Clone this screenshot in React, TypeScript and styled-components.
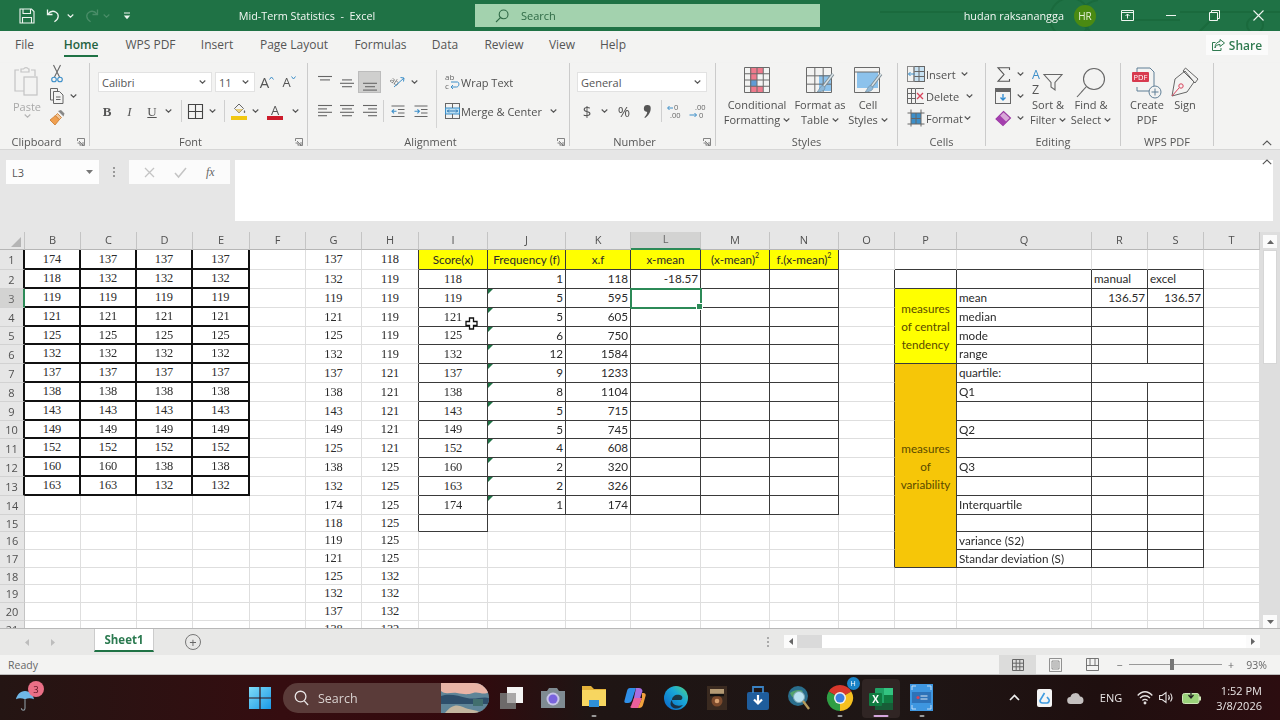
import React from "react";
import styled, { createGlobalStyle } from "styled-components";

const Global = createGlobalStyle`
  html, body { margin: 0; padding: 0; background: #e6e6e6; overflow: hidden; }
  #root { width: 1280px; height: 720px; }
  * { box-sizing: border-box; }
  svg { display: block; flex-shrink: 0; overflow: visible; }
`;

const Window = styled.div`
  width: 1280px; height: 720px; display: flex; flex-direction: column; overflow: hidden;
  font-family: "Open Sans", "Noto Sans", sans-serif; color: #4f4f4f; filter: blur(0.45px);
`;

/* ---------- shared small parts ---------- */
const Slot = styled.div<{ $w: number }>`
  width: ${(p) => p.$w}px; flex-shrink: 0; display: flex; align-items: center; justify-content: center; height: 100%;
`;
const EndSlot = styled(Slot)`justify-content: flex-end; padding-right: 1px;`;
const Row = styled.div`display: flex; align-items: center; height: 20px;`;
const Stack = styled.div<{ $gap?: number; $top?: number; $left?: number; $right?: number }>`
  display: flex; flex-direction: column; gap: ${(p) => p.$gap ?? 9}px;
  padding: ${(p) => p.$top ?? 9}px ${(p) => p.$right ?? 0}px 0 ${(p) => p.$left ?? 0}px;
`;
const Sep = styled.div`width: 1px; height: 22px; background: #cfcfcf;`;

const Caret = ({ c = "#555" }: { c?: string }) => (
  <svg width="7" height="4" viewBox="0 0 7 4"><path d="M.7.5 3.5 3.2 6.3.5" fill="none" stroke={c} strokeWidth="1.1" /></svg>
);

/* ---------- title bar ---------- */
const TitleBar = styled.header`
  position: relative; height: 31px; flex-shrink: 0; display: flex; align-items: center;
  background: #1f7245; color: #f2f7f3; font-size: 11px; overflow: hidden; padding-left: 16px;
`;
const Pattern = styled.svg`position: absolute; right: 0; top: 0; pointer-events: none;`;
const DocTitle = styled.div`width: 339px; text-align: center; padding-left: 3px; font-size: 10.8px; position: relative;`;
const TitleSearch = styled.div`
  width: 345px; height: 23px; background: #a3d2ae; color: #2f6a46; display: flex; align-items: center;
  font-size: 11px; position: relative;
`;
const SearchIconBox = styled.div`width: 46px; display: flex; justify-content: flex-end; padding-right: 12px;`;
const UserName = styled.div`margin-left: auto; font-size: 10.9px; margin-right: 10px; position: relative;`;
const Avatar = styled.div`
  width: 22px; height: 22px; border-radius: 50%; background: #4a8a12; color: #e4f0d6; font-size: 10px;
  display: flex; align-items: center; justify-content: center; margin-right: 10px; position: relative;
`;
const WinButton = styled.div`width: 43.5px; height: 100%; display: flex; align-items: center; justify-content: center; position: relative;`;

const SaveIcon = () => (
  <svg width="16" height="16" viewBox="0 0 16 16" fill="none" stroke="#eef5f0" strokeWidth="1.1">
    <path d="M1 1h11.5L15 3.5V15H1z" /><path d="M4 1v4.5h7.5V1M3.5 15V9.5h9V15" />
  </svg>
);
const UndoIcon = ({ c = "#eef5f0", flip }: { c?: string; flip?: boolean }) => (
  <svg width="15" height="15" viewBox="0 0 15 15" fill="none" stroke={c} strokeWidth="1.3">
    <g transform={flip ? "matrix(-1 0 0 1 15 0)" : undefined}>
      <path d="M1.5 1.5v5h5" /><path d="M1.8 6.4C4 3.4 7.4 2.7 10 4.2c3 1.8 3.4 6.5-1.6 9.6" />
    </g>
  </svg>
);
const QatIcon = () => (
  <svg width="8" height="8" viewBox="0 0 8 8"><path d="M1 1h6" stroke="#eef5f0" strokeWidth="1" /><path d="M.8 3.6h6.4L4 7.2z" fill="#eef5f0" /></svg>
);
const GlassIcon = ({ c = "#2f6a46", s = 14 }: { c?: string; s?: number }) => (
  <svg width={s} height={s} viewBox="0 0 14 14" fill="none" stroke={c} strokeWidth="1.1">
    <circle cx="8.6" cy="5.4" r="4.4" /><path d="M5.4 8.6 1 13" />
  </svg>
);

/* ---------- tabs ---------- */
const TabRow = styled.nav`height: 32px; flex-shrink: 0; display: flex; align-items: flex-start; padding-top: 2px; background: #f3f3f2;`;
const Tab = styled.div<{ $w: number; $on?: boolean }>`
  width: ${(p) => p.$w}px; text-align: center; font-size: 12px; line-height: 16px;
  color: ${(p) => (p.$on ? "#23623f" : "#555")}; font-weight: ${(p) => (p.$on ? 600 : 400)};
  span { display: inline-block; padding: 4px 0 2px; border-bottom: 2.5px solid ${(p) => (p.$on ? "#1f7245" : "transparent")}; }
`;
const ShareButton = styled.div`
  margin-left: auto; margin-right: 12px; width: 62px; height: 20px; background: #fbfbfb; color: #2f7a50;
  display: flex; align-items: center; justify-content: center; gap: 4px; font-size: 12px; font-weight: 600; margin-top: 2px;
`;

/* ---------- ribbon ---------- */
const Ribbon = styled.section`
  height: 87px; flex-shrink: 0; display: flex; background: #f3f3f2; border-bottom: 1px solid #d6d6d6;
  box-shadow: 0 1px 2px rgba(0,0,0,.08); position: relative; font-size: 11px; color: #505050;
`;
const Group = styled.div<{ $w: number; $plain?: boolean }>`
  width: ${(p) => p.$w}px; height: 83px; flex-shrink: 0; display: flex; flex-direction: column;
  border-right: ${(p) => (p.$plain ? "none" : "1px solid #cbcbcb")};
`;
const GroupBody = styled.div`height: 71px; flex-shrink: 0; display: flex;`;
const GroupFoot = styled.div`height: 15px; flex-shrink: 0; display: flex; align-items: center; margin-bottom: -3px; color: #565656;`;
const FootText = styled.div`flex: 1; text-align: center; white-space: nowrap;`;
const FootSlot = styled.div`width: 16px; display: flex; justify-content: center;`;
const Launcher = () => (
  <FootSlot>
    <svg width="8" height="8" viewBox="0 0 8 8" fill="none" stroke="#777" strokeWidth=".9"><path d="M.5 3V.5h7v7H5M.5 5h2.500v2.500M2 3l4 4M6 4v3H3" /></svg>
  </FootSlot>
);
const PasteCol = styled.div`
  width: 49px; padding: 3px 0 0 5px; display: flex; flex-direction: column; align-items: center; color: #a9a9a9; line-height: 15px;
  svg:first-child { margin-bottom: 3px; }
`;
const ToolCol = styled.div`display: flex; flex-direction: column; padding-top: 0;`;
const ToolRow = styled.div`height: 22px; display: flex; align-items: center;`;
const Select = styled.div<{ $w: number; $ml?: number }>`
  width: ${(p) => p.$w}px; height: 20px; background: #fff; border: 1px solid #e2e2e2; display: flex; align-items: center;
  justify-content: space-between; padding: 0 5px 0 3px; font-size: 11px; margin-left: ${(p) => p.$ml ?? 0}px; color: #555;
`;
const FontGlyph = styled.span<{ $s?: number; $i?: boolean; $b?: boolean; $u?: boolean; $c?: string }>`
  font-family: "Liberation Serif", serif; font-size: ${(p) => p.$s ?? 13}px; color: ${(p) => p.$c ?? "#555"};
  font-style: ${(p) => (p.$i ? "italic" : "normal")}; font-weight: ${(p) => (p.$b ? 700 : 400)};
  text-decoration: ${(p) => (p.$u ? "underline" : "none")}; line-height: 1;
`;
const SansGlyph = styled.span<{ $s?: number }>`font-family: "Open Sans", sans-serif; font-size: ${(p) => p.$s ?? 15}px; color: #555; line-height: 1;`;
const ActiveSlot = styled(Slot)`background: #cfcfce; border: 1px solid #bcbcbc; height: 22px;`;
const VRule = styled.div`width: 1px; height: 58px; background: #d4d4d4; margin-top: 7px;`;
const ToolText = styled.span`white-space: nowrap; font-size: 11px; color: #505050;`;
const BigButton = styled.div<{ $w: number }>`
  width: ${(p) => p.$w}px; flex-shrink: 0; display: flex; flex-direction: column; align-items: center; line-height: 15px;
  white-space: nowrap; color: #505050;
`;
const BigIcon = styled.div`height: 34px; padding-top: 4px; display: flex; align-items: flex-start; justify-content: center;`;
const BigLine = styled.div`display: flex; align-items: center; gap: 3px;`;
const Collapse = styled.div`margin-left: auto; align-self: flex-end; margin: 0 8px 3px auto;`;

const Lines = ({ rows, top = 0, w = 14 }: { rows: [number, number][]; top?: number; w?: number }) => (
  <svg width={w} height="14" viewBox={`0 0 ${w} 14`} stroke="#666" strokeWidth="1.1">
    {rows.map(([x, l], i) => <path key={i} d={`M${x} ${top + i * 3.4 + .5}h${l}`} />)}
  </svg>
);
const Indent = ({ flip }: { flip?: boolean }) => (
  <svg width="14" height="13" viewBox="0 0 14 13" fill="none" strokeWidth="1.1">
    <path d="M.5 1h13M7 4.5h6.5M7 8h6.5M.5 11.5h13" stroke="#666" />
    <path d={flip ? "M.5 6.3h4.5M3.4 4.3l2 2-2 2" : "M5.5 6.3H1M3 4.3l-2 2 2 2"} stroke="#3d8fc9" />
  </svg>
);

const Clip = () => (
  <svg width="26" height="30" viewBox="0 0 26 30" fill="none" stroke="#c4c4c4" strokeWidth="1.2">
    <path d="M5 4H1v21h9" /><path d="M17 4h4v6" /><path d="M7 6V3h2.500a3 3 0 0 1 5 0H15v3z" />
    <rect x="10" y="11" width="13" height="18" fill="#f3f3f2" />
  </svg>
);
const Scissors = () => (
  <svg width="12" height="18" viewBox="0 0 12 18" fill="none" strokeWidth="1.1">
    <path d="M2.500 0l6 12M9.500 0l-6 12" stroke="#666" /><circle cx="3" cy="14.500" r="2.300" stroke="#3d8fc9" /><circle cx="9" cy="14.500" r="2.300" stroke="#3d8fc9" />
  </svg>
);
const CopyIcon = () => (
  <svg width="14" height="16" viewBox="0 0 14 16" fill="none" stroke="#666" strokeWidth="1">
    <path d="M3 12H.5V.5h7V3" /><path d="M3.500 3.500h6l3.500 3.500v8.500H3.500zM6 9h4.500M6 11.500h4.500" />
  </svg>
);
const Painter = () => (
  <svg width="16" height="16" viewBox="0 0 16 16">
    <path d="M9 1l3-1 3.500 3.500-1 3z" fill="#888" /><path d="M8.500 3.500l4 4-2.200 2.200-4-4z" fill="#f3c89a" stroke="#c9792c" strokeWidth=".8" />
    <path d="M6.300 5.700l4 4L6 15 1 10z" fill="#f0a050" stroke="#c9792c" strokeWidth=".8" />
  </svg>
);
const BorderIcon = () => (
  <svg width="15" height="15" viewBox="0 0 15 15" fill="none" stroke="#444" strokeWidth="1.1"><path d="M.5.5h14v14H.5zM7.500.5v14M.5 7.500h14" /></svg>
);
const FillIcon = () => (
  <svg width="16" height="17" viewBox="0 0 16 17">
    <path d="M8 1l4.500 4.500L8 10 3.500 5.500z" fill="none" stroke="#666" strokeWidth="1" /><path d="M4 6h8l-4 4z" fill="#e8d080" />
    <path d="M13.500 7c1 1.500 1 3 0 3s-1-1.500 0-3z" fill="#666" /><rect y="13" width="16" height="4" fill="#f2c811" />
  </svg>
);
const ColorA = () => (
  <svg width="16" height="17" viewBox="0 0 16 17">
    <text x="8" y="11.500" textAnchor="middle" fontFamily="Open Sans, sans-serif" fontSize="13" fill="#555">A</text>
    <rect y="13" width="16" height="4" fill="#cc1b2b" />
  </svg>
);
const Orient = () => (
  <svg width="15" height="14" viewBox="0 0 15 14">
    <text x="0" y="8" fontSize="8" fontFamily="Open Sans, sans-serif" fill="#666" transform="rotate(35 3 6)">ab</text>
    <path d="M4 12 14 3M10.500 2.500 14 3l-.5 3.500" fill="none" stroke="#3d8fc9" strokeWidth="1" />
  </svg>
);
const WrapIcon = () => (
  <svg width="15" height="18" viewBox="0 0 15 18">
    <text x="0" y="7" fontSize="8" fontFamily="Open Sans, sans-serif" fill="#666">ab</text>
    <text x="0" y="16" fontSize="8" fontFamily="Open Sans, sans-serif" fill="#666">c</text>
    <path d="M6 9h6.500c2 0 2 5-1 5H6M8 12l-2 2 2 2" fill="none" stroke="#3d8fc9" strokeWidth="1" />
  </svg>
);
const MergeIcon = () => (
  <svg width="15" height="16" viewBox="0 0 15 16" fill="none" strokeWidth="1">
    <rect x=".5" y=".5" width="14" height="15" stroke="#666" /><rect x=".5" y="5" width="14" height="6" fill="#bfe0f2" stroke="#3d8fc9" />
    <path d="M7.500.5V5M7.500 11v4.500" stroke="#666" /><path d="M2 8h11M4 6.500 2.500 8 4 9.500M11 6.500 12.500 8 11 9.500" stroke="#2d79b5" />
  </svg>
);
const DecIcon = ({ inc }: { inc?: boolean }) => (
  <svg width="16" height="15" viewBox="0 0 16 15">
    <text x={inc ? 7 : 6} y="6" fontSize="7.500" fontFamily="Open Sans, sans-serif" fill="#666">{inc ? "0" : ".00"}</text>
    <text x={inc ? 3 : 10} y="14" fontSize="7.500" fontFamily="Open Sans, sans-serif" fill="#666">{inc ? ".00" : "0"}</text>
    {inc
      ? <path d="M6 4H.8M2.500 2 .6 4l1.900 2" fill="none" stroke="#3d8fc9" strokeWidth="1" />
      : <path d="M.5 11h7M5.500 9l2 2-2 2" fill="none" stroke="#3d8fc9" strokeWidth="1" />}
  </svg>
);
const CommaIcon = () => (
  <svg width="7" height="13" viewBox="0 0 7 13"><path d="M3.500 0a3.200 3.200 0 0 1 3.200 3.400C6.700 7.500 4 11 1 13l-.6-.8C2 10.800 3 9 3.200 7A3.400 3.400 0 0 1 3.500 0z" fill="#555" /></svg>
);
const GridBase = ({ w = 26, h = 26, cols = 4, rows = 4 }: { w?: number; h?: number; cols?: number; rows?: number }) => (
  <>
    {Array.from({ length: cols + 1 }, (_, i) => <path key={`c${i}`} d={`M${.5 + (i * (w - 1)) / cols} .5V${h - .5}`} stroke="#6a6a6a" strokeWidth="1" />)}
    {Array.from({ length: rows + 1 }, (_, i) => <path key={`r${i}`} d={`M.5 ${.5 + (i * (h - 1)) / rows}H${w - .5}`} stroke="#6a6a6a" strokeWidth="1" />)}
  </>
);
const CondIcon = () => (
  <svg width="26" height="26" viewBox="0 0 26 26">
    <rect x="6" y="1" width="13" height="6" fill="#ef7a8c" /><rect x="6" y="7" width="7" height="6" fill="#ef7a8c" /><rect x="6" y="13" width="7" height="6" fill="#5f9bd5" /><rect x="6" y="19" width="13" height="6" fill="#ef7a8c" />
    <GridBase />
  </svg>
);
const Brush = () => (
  <>
    <path d="M27 7 17 20" stroke="#7c8a92" strokeWidth="3.200" /><path d="M27 7 17 20" stroke="#d9e2e6" strokeWidth="1.400" />
    <path d="M15.500 19c2-1 4 .8 3.200 3-1 2.400-5 3-7.500 2.600 2-1 2.200-4.500 4.300-5.600z" fill="#8fb8d8" stroke="#6f8c9f" strokeWidth=".7" />
  </>
);
const TableIcon = () => (
  <svg width="28" height="28" viewBox="0 0 28 28">
    <rect x="13" y="8" width="13" height="16" fill="#8cc2ec" /><GridBase w={26} h={26} cols={3} rows={3} /><Brush />
  </svg>
);
const StyleIcon = () => (
  <svg width="28" height="28" viewBox="0 0 28 28">
    <rect x="3" y="5" width="21" height="16" fill="#8cc2ec" />
    <path d="M.5.5h25v25H.5z M.5 5h25" fill="none" stroke="#6a6a6a" /><Brush />
  </svg>
);
const InsertIcon = () => (
  <svg width="18" height="16" viewBox="0 0 18 16" fill="none" strokeWidth="1">
    <rect x="7" y=".5" width="10.500" height="15" fill="#c8e2f3" stroke="#666" /><path d="M7 5.500h10.500M7 10.500h10.500M12 .5v15" stroke="#666" />
    <rect x=".5" y=".5" width="6.500" height="15" stroke="#888" /><path d="M1.500 8h6M3.500 6l-2 2 2 2" stroke="#3d8fc9" />
  </svg>
);
const DeleteIcon = () => (
  <svg width="18" height="16" viewBox="0 0 18 16" fill="none" strokeWidth="1">
    <path d="M.5.5h8v15h-8zM.5 5.500h8M.5 10.500h8M4.500.5v15M9 .5h8M9 15.500h8" stroke="#666" />
    <path d="M10 5l6 6M16 5l-6 6" stroke="#d8425a" strokeWidth="1.300" />
  </svg>
);
const FormatIcon = () => (
  <svg width="18" height="18" viewBox="0 0 18 18" fill="none" strokeWidth="1">
    <rect x="4" y="4" width="10" height="11" fill="#3d8fc9" /><path d="M.5 4h17M.5 15h17M4 .5v17M14 .5v17M9 4v11M4 9.500h10" stroke="#666" />
  </svg>
);
const FillDown = () => (
  <svg width="16" height="16" viewBox="0 0 16 16" fill="none"><rect x=".5" y=".5" width="15" height="15" stroke="#666" /><rect x="1" y="1" width="14" height="3" fill="#666" /><path d="M8 6v6M5.500 9.500 8 12l2.500-2.500" stroke="#2d8ad0" strokeWidth="1.300" /></svg>
);
const Eraser = () => (
  <svg width="16" height="15" viewBox="0 0 16 15"><path d="M8.500.5 15.500 7 8 14.500 1 8z" fill="#d8a7d8" stroke="#9b3aa3" strokeWidth="1.100" /><path d="M5 4.500l6.500 6.500L8 14.500 1 8z" fill="#a43fae" /></svg>
);
const Sigma = () => (
  <svg width="13" height="15" viewBox="0 0 13 15" fill="none" stroke="#555" strokeWidth="1.100"><path d="M12.500 3V.7H1L7 7.500 1 14.300h11.500V12" /></svg>
);
const SortIcon = () => (
  <svg width="32" height="30" viewBox="0 0 32 30">
    <text x="0" y="12" fontSize="12.500" fontFamily="Open Sans, sans-serif" fill="#3d8fc9">A</text>
    <text x="0" y="27" fontSize="12.500" fontFamily="Open Sans, sans-serif" fill="#555">Z</text>
    <path d="M12 7.500h18l-7 8v7.500l-4-3v-4.500z" fill="none" stroke="#666" strokeWidth="1.100" />
  </svg>
);
const FindIcon = () => (
  <svg width="30" height="31" viewBox="0 0 30 31" fill="none" stroke="#666" strokeWidth="1.100"><circle cx="18" cy="12" r="10.500" /><path d="M10.500 19.500 1 30" /></svg>
);
const PdfIcon = () => (
  <svg width="30" height="32" viewBox="0 0 30 32" fill="none">
    <path d="M5 5V1h13l4 4v19H5v-4M5 10v4" stroke="#5f7e96" strokeWidth="1" />
    <rect x="0" y="5" width="17" height="10" rx="1" fill="#d83a4e" />
    <text x="8.500" y="13" textAnchor="middle" fontSize="7.500" fontFamily="Open Sans, sans-serif" fill="#fff">PDF</text>
    <circle cx="23" cy="25" r="6" fill="#f3f3f2" stroke="#5f7e96" /><path d="M23 21.500v7M19.500 25h7" stroke="#5f7e96" />
  </svg>
);
const SignIcon = () => (
  <svg width="28" height="31" viewBox="0 0 28 31" fill="none" stroke="#666" strokeWidth="1">
    <path d="M14 4 4 12 1 29l15-4 7-10z" /><path d="M14.500 1 27 12l-3 4-12-12z" />
    <path d="M1 29l7-8" stroke="#d8425a" /><circle cx="10" cy="19" r="2.200" stroke="#d8425a" />
  </svg>
);
const ChevronUp = () => (
  <svg width="10" height="6" viewBox="0 0 10 6" fill="none" stroke="#555" strokeWidth="1.100"><path d="M.8 5.200 5 1l4.200 4.200" /></svg>
);

/* ---------- formula bar ---------- */
const FormulaBar = styled.div`
  height: 82px; flex-shrink: 0; background: #e6e6e6; display: flex; align-items: flex-start; padding: 10px 7px 0 6px; position: relative;
`;
const NameBox = styled.div`
  width: 93px; height: 24px; background: #fdfdfd; display: flex; align-items: center; justify-content: space-between;
  padding: 0 6px; font-size: 11px; color: #555;
`;
const Dots = styled.div`
  width: 30px; height: 24px; display: flex; flex-direction: column; align-items: center; justify-content: center; gap: 2px;
  i { width: 2px; height: 2px; background: #999; }
`;
const FxGroup = styled.div`
  width: 101px; height: 24px; background: #fbfbfb; display: flex; align-items: center; justify-content: space-around; padding: 0 6px;
`;
const FxMark = styled.span`font-family: "Liberation Serif", serif; font-style: italic; font-size: 12px; color: #666;`;
const FormulaInput = styled.div`margin-left: 5px; flex: 1; height: 61px; background: #fff;`;
const FormulaCollapse = styled.div`position: absolute; right: 8px; top: 9px;`;

/* ---------- sheet ---------- */
const SheetArea = styled.div`height: 397px; flex-shrink: 0; display: flex; background: #e6e6e6; border-bottom: 1px solid #b8b8b8;`;
const Grid = styled.div`
  width: 1260px; height: 396px; overflow: hidden; display: grid; background: #fff;
  grid-template-columns: 25px 56px 56px 56px 57px 56px 56px 57px 69px 78px 65px 70px 69px 69px 56px 62px 135px 56px 56px 56px;
  grid-template-rows: 17px 20px 19px 19px 19px 18px 19px 19px 19px 19px 18px 19px 19px 19px 19px 17px 18px 18px 17px 18px 18px 18px;
  padding-top: 1px;
`;
const HeadCell = styled.div<{ $on?: boolean; $rb?: string; $bb?: string; $col?: boolean }>`
  background: ${(p) => (p.$on ? "#d3d3d2" : "#e6e6e6")};
  color: ${(p) => (p.$on ? "#666" : "#505050")}; font-size: 11px;
  display: flex; align-items: center; justify-content: center; line-height: 1;
  border-right: ${(p) => p.$rb ?? "1px solid #c4c4c4"};
  border-bottom: ${(p) => p.$bb ?? "1px solid #b6b6b6"};
  ${(p) => (p.$col ? "margin-top: -1px; padding-bottom: 3px;" : "")}
`;
const Corner = styled(HeadCell)`
  align-items: flex-end; justify-content: flex-end; padding: 0 3px 2px 0;
  &::after { content: ""; border-style: solid; border-width: 0 0 10px 10px; border-color: transparent transparent #b5b5b5 transparent; }
`;
const FONT = { serif: `"Liberation Serif", serif`, sans: `Lato, "Open Sans", sans-serif` };
const Cell = styled.div<{
  $r: string; $b: string; $align: string; $sans?: boolean; $bg?: string; $rs?: number; $cs?: number; $flag?: boolean; $sel?: boolean; $wrap?: boolean;
}>`
  position: relative; display: flex; align-items: center; justify-content: ${(p) => p.$align}; padding: 0 2px;
  font-family: ${(p) => (p.$sans ? FONT.sans : FONT.serif)}; font-size: ${(p) => (p.$sans ? 11.7 : 12.4)}px; color: #2b2b2b; line-height: 1;
  white-space: nowrap; background: ${(p) => p.$bg ?? "#fff"};
  border-right: ${(p) => p.$r}; border-bottom: ${(p) => p.$b};
  ${(p) => (p.$rs ? `grid-row: span ${p.$rs};` : "")} ${(p) => (p.$cs ? `grid-column: span ${p.$cs};` : "")}
  ${(p) => (p.$wrap ? `white-space: normal; text-align: center; line-height: 18px; color: #5a4a00;` : "")}
  ${(p) => p.$flag ? `&::before { content: ""; position: absolute; left: 0; top: 0; border-style: solid; border-width: 5px 5px 0 0; border-color: #1f7245 transparent transparent transparent; }` : ""}
  ${(p) => p.$sel ? `outline: 2px solid #2c8a57; outline-offset: -1px; z-index: 2; &::after { content: ""; position: absolute; right: -3px; bottom: -3px; width: 5px; height: 5px; background: #2c8a57; border: 1px solid #fff; }` : ""}
  sup { font-size: 7px; line-height: 0; position: relative; top: -1px; }
`;
const Pointer = styled.svg`position: absolute; left: 46px; top: 9px; z-index: 3;`;
const VScroll = styled.div`width: 20px; height: 396px; padding: 3px 3px 0 3px; display: flex; flex-direction: column; align-items: stretch; background: #dedede;`;
const ScrollBtn = styled.div<{ $w?: number }>`
  height: 13px; background: #fbfbfb; display: flex; align-items: center; justify-content: center; flex-shrink: 0;
  ${(p) => (p.$w ? `width: ${p.$w}px; height: 100%;` : "")}
`;
const VThumb = styled.div`height: 114px; margin-top: 2px; background: #fff; border: 1px solid #d6d6d6;`;
const VFill = styled.div`flex: 1;`;
const Tri = ({ d, c = "#666" }: { d: "u" | "d" | "l" | "r"; c?: string }) => {
  const p = { u: "M0 4 3.500 0 7 4z", d: "M0 0h7L3.500 4z", l: "M4 0v7L0 3.500z", r: "M0 0v7l4-3.500z" }[d];
  return <svg width={d === "u" || d === "d" ? 7 : 4} height={d === "u" || d === "d" ? 4 : 7}><path d={p} fill={c} /></svg>;
};

/* ---------- sheet tabs + status ---------- */
const TabStrip = styled.div`height: 26px; flex-shrink: 0; background: #e8e8e7; display: flex; padding-left: 14px;`;
const SheetTab = styled.div`
  width: 60px; height: 23px; margin-left: 28px; background: #fff; border-bottom: 2px solid #1f7245; color: #2b7a50; font-weight: 700; font-size: 11.5px;
  display: flex; align-items: center; justify-content: center; border-left: 1px solid #ccc; border-right: 1px solid #ccc;
`;
const PlusCircle = styled.div`
  width: 16px; height: 16px; border-radius: 50%; border: 1px solid #777; color: #666; display: flex; align-items: center; justify-content: center;
  font-size: 13px; line-height: 1;
`;
const HScroll = styled.div`margin: 6px 20px 0 auto; display: flex; height: 13px; align-items: stretch;`;
const VDots = styled.div`
  width: 16px; margin-right: 8px; display: flex; flex-direction: column; gap: 2px; align-items: center; justify-content: center;
  i { width: 2px; height: 2px; background: #aaa; }
`;
const HTrack = styled.div`width: 25px; background: #dadada;`;
const HThumb = styled.div`width: 424px; background: #fff;`;
const StatusBar = styled.div`height: 20px; flex-shrink: 0; background: #f3f3f2; display: flex; align-items: center; font-size: 10.500px; color: #666; padding-left: 8px; border-bottom: 1px solid #bdbdbd;`;
const StatusGap = styled.div`margin-left: auto;`;
const ViewBtn = styled.div<{ $on?: boolean; $w: number }>`
  width: ${(p) => p.$w}px; height: 100%; display: flex; align-items: center; justify-content: center; background: ${(p) => (p.$on ? "#dcdcdb" : "transparent")};
`;
const Zoomer = styled.div`position: relative; width: 93px; height: 1px; background: #999;`;
const ZoomThumb = styled.div`position: absolute; left: 41px; top: -5px; width: 4px; height: 11px; background: #777;`;
const Pct = styled.div`width: 33px; text-align: center;`;
const ViewGrid = () => (
  <svg width="12" height="12" viewBox="0 0 12 12" fill="none" stroke="#666"><path d="M.5.5h11v11H.5zM4.200.5v11M7.800.5v11M.5 4.200h11M.5 7.800h11" /></svg>
);
const ViewPage = () => (
  <svg width="13" height="14" viewBox="0 0 13 14" fill="none" stroke="#777"><path d="M.5.5h12v13H.5zM3 3h7v8H3zM4 5h5M4 7h5M4 9h5" strokeWidth=".8" /></svg>
);
const ViewBreak = () => (
  <svg width="13" height="13" viewBox="0 0 13 13" fill="none" stroke="#666"><path d="M.5.5h12v12H.5zM.5 7.500h12M4 .5v7M9 .5v7" strokeWidth=".9" /></svg>
);

/* ---------- taskbar ---------- */
const Taskbar = styled.footer`
  height: 45px; flex-shrink: 0; display: flex; align-items: stretch; color: #e8e4e4;
  background: linear-gradient(90deg, #241513 0%, #350d10 22%, #33090d 36%, #1f1514 46%, #1e1615 70%, #1f0f0f 86%, #2c0d10 100%);
`;
const Weather = styled.div`width: 240px; padding: 7px 0 0 5px; display: flex; align-items: center; flex-shrink: 0;`;
const WeatherIcon = styled.div`position: relative; width: 40px; display: flex; justify-content: center;`;
const Badge = styled.div`
  position: absolute; left: 23px; top: -9px; width: 16px; height: 16px; border-radius: 50%; background: #ea6f86; color: #5b1422;
  font-size: 9.500px; display: flex; align-items: center; justify-content: center;
`;
const TaskSearch = styled.div`
  width: 206px; height: 30px; margin: 8px 2px 0 3px; border-radius: 15px; background: #5a3b39; display: flex; align-items: center; color: #d9d2d0;
  font-size: 12.500px; padding-left: 11px; overflow: hidden; flex-shrink: 0; gap: 9px;
`;
const SearchScene = styled.svg`margin-left: auto;`;
const TaskApp = styled.div<{ $dot?: boolean; $active?: boolean }>`
  position: relative; width: 41px; flex-shrink: 0; display: flex; align-items: center; justify-content: center;
  ${(p) => (p.$active ? "background: #302524; border-radius: 4px; margin: 4px 1.500px 2px; width: 38px;" : "")}
  ${(p) => p.$dot ? `&::after { content: ""; position: absolute; bottom: ${p.$active ? "1px" : "3px"}; left: 50%; transform: translateX(-50%);
     width: ${p.$active ? "15px" : "5px"}; height: 2.500px; border-radius: 2px; background: ${p.$active ? "#d5a6dd" : "#9a9a9a"}; }` : ""}
`;
const ChromeWrap = styled.div`position: relative;`;
const HBadge = styled.div`
  position: absolute; right: -7px; top: -8px; width: 13px; height: 13px; border-radius: 50%; background: #1a83c6; color: #fff; font-size: 7.500px;
  display: flex; align-items: center; justify-content: center;
`;
const TraySpacer = styled.div`flex: 1;`;
const EngLabel = styled(Slot)`font-size: 11px; width: 42px;`;
const Clock = styled.div`
  width: 54px; display: flex; flex-direction: column; align-items: flex-end; justify-content: center; font-size: 11px; line-height: 15px;
  margin-right: 18px; white-space: nowrap; flex-shrink: 0; height: 100%;
`;

const WinLogo = () => (
  <svg width="22" height="22" viewBox="0 0 22 22">
    <defs><linearGradient id="wl" x1="0" y1="0" x2="1" y2="1"><stop offset="0" stopColor="#7fdcf7" /><stop offset="1" stopColor="#1a98e6" /></linearGradient></defs>
    <path d="M0 0h10.400v10.400H0zM11.600 0H22v10.400H11.600zM0 11.600h10.400V22H0zM11.600 11.600H22V22H11.600z" fill="url(#wl)" />
  </svg>
);
const Umbrella = () => (
  <svg width="18" height="22" viewBox="0 0 20 24">
    <path d="M10 1C4.500 1 1 5.500 0 10c3-1.500 6-1.500 10 0 3.500-1.500 7-1.500 10 0C19 5.500 15.500 1 10 1z" fill="#6fb6e6" />
    <path d="M10 10v10c0 3-4 3-4 0" fill="none" stroke="#8c9aa2" strokeWidth="1.200" />
  </svg>
);
const Scene = () => (
  <SearchScene width="48" height="30" viewBox="0 0 48 30">
    <rect width="48" height="30" fill="#5f8598" /><path d="M0 0h48v9c-6 4-10-1-16 1s-10 1-16 0S4 12 0 8z" fill="#e9b4a6" />
    <path d="M0 13c8-3 18 0 26 2s16-2 22 0v6H0z" fill="#2e4f6b" /><path d="M4 30c6-8 12-9 18-6s12 2 18 6z" fill="#c3b69f" /><path d="M32 16h10v7H32z" fill="#426f6e" />
  </SearchScene>
);
const TaskGlass = () => (
  <svg width="15" height="16" viewBox="0 0 16 17" fill="none" stroke="#e8e4e4" strokeWidth="1.400"><circle cx="7" cy="7" r="5.700" /><path d="M11 11.500l4 4.500" /></svg>
);
const TaskView = () => (
  <svg width="24" height="22" viewBox="0 0 24 22"><rect y="6" width="16" height="16" fill="#6d6a6a" /><rect x="7" y="0" width="16" height="16" fill="#f4f4f4" /><rect x="7" y="6" width="9" height="10" fill="#a9a7a7" /></svg>
);
const Camera = () => (
  <svg width="24" height="20" viewBox="0 0 24 20"><path d="M0 3h6l2-3h8l2 3h6v17H0z" fill="#7f8b92" /><circle cx="12" cy="11" r="6.500" fill="#c8c4e8" /><circle cx="12" cy="11" r="4.500" fill="#7a63dd" /></svg>
);
const Folder = () => (
  <svg width="24" height="23" viewBox="0 0 24 23"><path d="M0 0h9l3 3h12v4H0z" fill="#e3b23a" /><rect y="4" width="24" height="16" fill="#f7d660" /><rect x="7" y="14" width="10" height="7" fill="#2e8fd8" /></svg>
);
const Copilot = () => (
  <svg width="22" height="22" viewBox="0 0 22 22">
    <path d="M6 1h6l-4 12c-.6 2-2 3-4 3H2C.5 16 0 15 .5 13.500L3 4c.4-2 1.500-3 3-3z" fill="#2f8fe8" />
    <path d="M12 1h3c2 0 3 1 3.500 3l-3 9h-6z" fill="#a86de0" /><path d="M14 21H8c-2 0-2-1.500-1-2l3-8h8l-3 8c-.2 1-.5 2-1 2z" fill="#ea5f9c" />
    <path d="M18 6h1.500c1.500 0 2.500 1 2.200 2.500L19 18c-.5 2-2 3-4 3h-1l4-10z" fill="#f2a13d" />
  </svg>
);
const Edge = () => (
  <svg width="24" height="24" viewBox="0 0 24 24">
    <defs><linearGradient id="eg" x1="0" y1="1" x2="1" y2="0"><stop offset="0" stopColor="#0a63c9" /><stop offset=".6" stopColor="#19a7d8" /><stop offset="1" stopColor="#52d67c" /></linearGradient></defs>
    <circle cx="12" cy="12" r="12" fill="url(#eg)" /><path d="M8 14c0-4 4-6 8-5 3 1 3 4 1 5h-9zM8 14c0 4 4 7 11 5-2 3-7 5-11 2-2-1.500-2-5 0-7z" fill="#1f1514" opacity=".75" />
  </svg>
);
const Photo = () => (
  <svg width="20" height="24" viewBox="0 0 20 24"><rect width="20" height="24" fill="#3a2a20" /><rect x="3" y="3" width="14" height="7" fill="#b49a74" /><circle cx="10" cy="15" r="5.500" fill="#7c4a2c" /><circle cx="10" cy="15" r="2.300" fill="#d8a070" /><path d="M3 9h14" stroke="#111" strokeWidth="2.400" /></svg>
);
const Store = () => (
  <svg width="22" height="24" viewBox="0 0 22 24"><rect y="6" width="22" height="18" rx="2" fill="#1f5d9c" /><path d="M6 7V1h10v6" fill="none" stroke="#3a82c2" strokeWidth="1.800" /><path d="M11 9v8M7 13.500l4 4 4-4" fill="none" stroke="#fff" strokeWidth="2.200" /></svg>
);
const Globe = () => (
  <svg width="22" height="24" viewBox="0 0 22 24"><circle cx="10" cy="10" r="10" fill="#2a6e8c" /><path d="M2 7c4-3 9-4 13-2-2 2-4 6-8 7-2 0-4-2-5-5z" fill="#54a36c" /><circle cx="11" cy="11" r="5.500" fill="#b9e2f0" stroke="#7fa5b2" /><path d="M15 15l6 8" stroke="#b89b5c" strokeWidth="2.400" /></svg>
);
const Chrome = () => (
  <svg width="26" height="26" viewBox="0 0 26 26">
    <path d="M13 13 1.700 6.500A13 13 0 0 1 24.300 6.500z" fill="#d8382c" /><path d="M13 13 24.300 6.500A13 13 0 0 1 13 26z" fill="#f5c020" /><path d="M13 13V26A13 13 0 0 1 1.700 6.500z" fill="#2f9e44" />
    <circle cx="13" cy="13" r="6" fill="#f0f0f0" /><circle cx="13" cy="13" r="4.500" fill="#3b7fe0" />
  </svg>
);
const ExcelIcon = () => (
  <svg width="24" height="24" viewBox="0 0 24 24">
    <rect x="6" y="1" width="18" height="22" rx="1" fill="#21a366" /><rect x="15" y="1" width="9" height="7" fill="#33c481" /><rect x="15" y="8" width="9" height="8" fill="#107c41" /><rect x="6" y="16" width="18" height="7" fill="#185c37" />
    <rect x="0" y="6" width="13" height="13" rx="1" fill="#107c41" />
    <text x="6.500" y="16" textAnchor="middle" fontSize="10" fontWeight="700" fontFamily="Open Sans, sans-serif" fill="#fff">X</text>
  </svg>
);
const Recorder = () => (
  <svg width="23" height="27" viewBox="0 0 23 27"><rect width="23" height="27" fill="#3e96e0" /><rect x="2" y="8" width="19" height="11" fill="#2e72b8" /><circle cx="8" cy="13.500" r="1.600" fill="#d8425a" /><path d="M10.500 12h7M10.500 15h7" stroke="#dbe8f5" strokeWidth="1" /><path d="M2 6V2h4M21 6V2h-4M2 21v4h4M21 21v4h-4" fill="none" stroke="#cfe4f7" strokeWidth=".9" /></svg>
);
const TrayUp = () => (
  <svg width="11" height="7" viewBox="0 0 11 7" fill="none" stroke="#eee" strokeWidth="1.600"><path d="M1 6 5.500 1.500 10 6" /></svg>
);
const GDrive = () => (
  <svg width="15" height="18" viewBox="0 0 15 18"><rect width="15" height="18" rx="2" fill="#f5f5f5" /><path d="M7.500 4 3 11.500a2.500 2.500 0 0 0 2.500 2.500h4.500a2.500 2.500 0 0 0 2-3.500L10 8" fill="none" stroke="#3f9be0" strokeWidth="1.600" /></svg>
);
const Cloud = () => (
  <svg width="17" height="12" viewBox="0 0 17 12"><path d="M4 12a3.500 3.500 0 0 1-.6-7A5 5 0 0 1 13 4.500 3.800 3.800 0 0 1 13.500 12z" fill="#c4c0bf" /></svg>
);
const Wifi = () => (
  <svg width="16" height="13" viewBox="0 0 16 13" fill="none" stroke="#e6e2e2" strokeWidth="1.300"><path d="M.7 4.500C5-.5 11-.5 15.300 4.500M3 7c3-3 7-3 10 0M5.400 9.500c1.500-1.500 3.700-1.500 5.200 0" /><circle cx="8" cy="12" r=".8" fill="#e6e2e2" /></svg>
);
const Speaker = () => (
  <svg width="15" height="13" viewBox="0 0 15 13" fill="none" stroke="#e6e2e2" strokeWidth="1.100"><path d="M.6 4.500h2.500L7 1.500v10L3.100 8.500H.6zM9.500 4c1 1.500 1 3.500 0 5M11.500 2.500c1.800 2.500 1.800 5.500 0 8" /></svg>
);
const Battery = () => (
  <svg width="19" height="13" viewBox="0 0 19 13"><rect x=".5" y="2.500" width="16.500" height="10" rx="2" fill="#9ad27a" stroke="#cfe6b8" /><rect x="17" y="5.500" width="2" height="4" fill="#cfe6b8" /><path d="M9 0v6M6.500 4 9 7l2.500-3" fill="none" stroke="#222" strokeWidth="1.300" /></svg>
);

/* ---------- sheet data ---------- */
const COLS = "BCDEFGHIJKLMNOPQRST".split("");
const base = [119, 121, 125, 132, 137, 138, 143, 149, 152];
const DATA: Record<string, (string | number)[]> = {
  B: [174, 118, ...base, 160, 163],
  C: [137, 132, ...base, 160, 163],
  D: [137, 132, ...base, 138, 132],
  E: [137, 132, ...base, 138, 132],
  G: [137, 132, 119, 121, 125, 132, 137, 138, 143, 149, 125, 138, 132, 174, 118, 119, 121, 125, 132, 137, 138],
  H: [118, 119, 119, 119, 119, 119, 121, 121, 121, 121, 121, 125, 125, 125, 125, 125, 125, 132, 132, 132, 132],
  I: ["", 118, 119, 121, 125, 132, 137, 138, 143, 149, 152, 160, 163, 174],
  J: ["", 1, 5, 5, 6, 12, 9, 8, 5, 5, 4, 2, 2, 1],
  K: ["", 118, 595, 605, 750, 1584, 1233, 1104, 715, 745, 608, 320, 326, 174],
};
const QLABELS: Record<number, string> = {
  3: "mean", 4: "median", 5: "mode", 6: "range", 7: "quartile:", 8: "Q1", 10: "Q2", 12: "Q3", 14: "Interquartile", 16: "variance (S2)", 17: "Standar deviation (S)",
};
const THICK = "2px solid #111";
const THIN = "1px solid #3a3a3a";
const GRID = "1px solid #dedede";
const idx = (c: string) => COLS.indexOf(c);
const between = (c: string, a: string, b: string) => idx(c) >= idx(a) && idx(c) <= idx(b);

const right = (c: string, r: number) => {
  if (between(c, "B", "E") && r <= 13) return THICK;
  if ((c === "H" || c === "I") && r <= 15) return THIN;
  if (between(c, "J", "N") && r <= 14) return THIN;
  if ((c === "O" || between(c, "P", "S")) && r >= 2 && r <= 17) return THIN;
  return GRID;
};
const bottom = (c: string, r: number) => {
  if (between(c, "B", "E") && r <= 13) return THICK;
  if (c === "I" && r <= 15) return THIN;
  if (between(c, "J", "N") && r <= 14) return THIN;
  if (between(c, "P", "S") && r >= 1 && r <= 17) return THIN;
  return GRID;
};
const isHeadCol = (c: string) => between(c, "I", "N");
const HEADS: Record<string, React.ReactNode> = {
  I: "Score(x)", J: "Frequency (f)", K: "x.f", L: "x-mean",
  M: <span>(x-mean)<sup>2</sup></span>, N: <span>f.(x-mean)<sup>2</sup></span>,
};

function cellFor(c: string, r: number) {
  const key = `${c}${r}`;
  const common = { $r: right(c, r), $b: bottom(c, r), key };
  if (c === "P" && r === 3)
    return <Cell {...common} $b={THIN} $align="center" $sans $wrap $bg="#ffff00" $rs={4}>measures of central tendency</Cell>;
  if (c === "P" && r > 3 && r <= 6) return null;
  if (c === "P" && r === 7)
    return <Cell {...common} $b={THIN} $align="center" $sans $wrap $bg="#f6c608" $rs={11}>measures<br />of<br />variability</Cell>;
  if (c === "P" && r > 7 && r <= 17) return null;
  if (c === "R" && r === 7) return <Cell {...common} $r={THIN} $align="flex-start" $cs={2} />;
  if (c === "S" && r === 7) return null;
  if (r === 1 && isHeadCol(c))
    return <Cell {...common} $align="center" $sans $bg="#ffff00">{HEADS[c]}</Cell>;
  const v = DATA[c]?.[r - 1];
  if (v !== undefined && v !== "") {
    const isRight = c === "J" || c === "K";
    return (
      <Cell {...common} $align={isRight ? "flex-end" : "center"} $sans={isRight} $flag={c === "J" && r >= 3}>
        {v}
        {key === "I4" && (
          <Pointer width="13" height="13" viewBox="0 0 13 13"><path d="M4.500 1h4v3.500H12v4H8.500V12h-4V8.500H1v-4h3.500z" fill="#fff" stroke="#111" strokeWidth="1.300" /></Pointer>
        )}
      </Cell>
    );
  }
  if (key === "L2") return <Cell {...common} $align="flex-end" $sans>-18.57</Cell>;
  if (key === "L3") return <Cell {...common} $align="center" $sel />;
  if (c === "Q" && QLABELS[r]) return <Cell {...common} $align="flex-start" $sans>{QLABELS[r]}</Cell>;
  if (key === "R2") return <Cell {...common} $align="flex-start" $sans>manual</Cell>;
  if (key === "S2") return <Cell {...common} $align="flex-start" $sans>excel</Cell>;
  if (key === "R3" || key === "S3") return <Cell {...common} $align="flex-end" $sans>136.57</Cell>;
  return <Cell {...common} $align="center" />;
}

const rowNums = Array.from({ length: 21 }, (_, i) => i + 1);
const TABS: [string, number, boolean?][] = [
  ["File", 49], ["Home", 64, true], ["WPS PDF", 75], ["Insert", 58], ["Page Layout", 96], ["Formulas", 77], ["Data", 52], ["Review", 66], ["View", 50], ["Help", 52],
];

export default function App() {
  return (
    <Window>
      <Global />
      <TitleBar>
        <Pattern width="400" height="31" viewBox="0 0 400 31" fill="none" stroke="#1a6a3d" strokeWidth="2">
          <path d="M0 12h150M210 31c-14-10-10-28 8-31M300 12h100M320 31l20-20M240 20h60" />
          <circle cx="190" cy="18" r="20" /><circle cx="375" cy="25" r="8" />
        </Pattern>
        <Slot $w={22}><SaveIcon /></Slot>
        <Slot $w={30}><UndoIcon /></Slot>
        <Slot $w={4}><Caret c="#eef5f0" /></Slot>
        <Slot $w={8} />
        <Slot $w={22}><UndoIcon flip c="#4a8d68" /></Slot>
        <Slot $w={8}><Caret c="#4a8d68" /></Slot>
        <Slot $w={8} />
        <Slot $w={18}><QatIcon /></Slot>
        <DocTitle>Mid-Term Statistics&nbsp; -&nbsp; Excel</DocTitle>
        <TitleSearch>
          <SearchIconBox><GlassIcon /></SearchIconBox>
          Search
        </TitleSearch>
        <UserName>hudan raksanangga</UserName>
        <Avatar>HR</Avatar>
        <WinButton>
          <svg width="13" height="11" viewBox="0 0 13 11" fill="none" stroke="#eef5f0"><path d="M.5.5h12v10H.5zM.5 2.500h12M6.500 8.500V4M4.500 6l2-2 2 2" /></svg>
        </WinButton>
        <WinButton><svg width="10" height="1"><path d="M0 .5h10" stroke="#eef5f0" /></svg></WinButton>
        <WinButton>
          <svg width="11" height="11" viewBox="0 0 11 11" fill="none" stroke="#eef5f0"><path d="M.5 2.500h8v8h-8zM2.500 2.500v-2h8v8h-2" /></svg>
        </WinButton>
        <WinButton>
          <svg width="11" height="11" viewBox="0 0 11 11" fill="none" stroke="#eef5f0" strokeWidth="1.100"><path d="M.5.5l10 10M10.500.5l-10 10" /></svg>
        </WinButton>
      </TitleBar>

      <TabRow>
        {TABS.map(([t, w, on]) => <Tab key={t} $w={w} $on={on}><span>{t}</span></Tab>)}
        <ShareButton>
          <svg width="13" height="12" viewBox="0 0 13 12" fill="none" stroke="#2f7a50"><path d="M8 .5l4.500 3.500L8 7.500V5.500C5 5.500 3.500 7 3 9c0-4 2-6 5-6.500zM9 9v2.500H.5V3.500h3" /></svg>
          Share
        </ShareButton>
      </TabRow>

      <Ribbon>
        <Group $w={90}>
          <GroupBody>
            <PasteCol>
              <Clip />
              Paste
              <Caret c="#b5b5b5" />
            </PasteCol>
            <ToolCol>
              <ToolRow><Slot $w={16}><Scissors /></Slot></ToolRow>
              <ToolRow><Slot $w={16}><CopyIcon /></Slot><Slot $w={16}><Caret /></Slot></ToolRow>
              <ToolRow><Slot $w={16}><Painter /></Slot></ToolRow>
            </ToolCol>
          </GroupBody>
          <GroupFoot><FootText>Clipboard</FootText><Launcher /></GroupFoot>
        </Group>

        <Group $w={218}>
          <GroupBody>
            <Stack $left={6}>
              <Row>
                <Select $w={114} $ml={2}>Calibri<Caret /></Select>
                <Select $w={40} $ml={3}>11<Caret /></Select>
                <Slot $w={24}><SansGlyph $s={15}>A</SansGlyph><svg width="5" height="4" viewBox="0 0 5 4" style={{ marginBottom: 8 }}><path d="M.5 3.500 2.500 1l2 2.500" fill="none" stroke="#3d8fc9" /></svg></Slot>
                <Slot $w={20}><SansGlyph $s={13}>A</SansGlyph><svg width="5" height="4" viewBox="0 0 5 4" style={{ marginBottom: 8 }}><path d="M.5.5 2.500 3l2-2.500" fill="none" stroke="#3d8fc9" /></svg></Slot>
              </Row>
              <Row>
                <Slot $w={22}><FontGlyph $b>B</FontGlyph></Slot>
                <Slot $w={23}><FontGlyph $i>I</FontGlyph></Slot>
                <Slot $w={22}><FontGlyph $u>U</FontGlyph></Slot>
                <Slot $w={10}><Caret /></Slot>
                <Slot $w={16}><Sep /></Slot>
                <Slot $w={12}><BorderIcon /></Slot>
                <Slot $w={22}><Caret /></Slot>
                <Slot $w={2}><Sep /></Slot>
                <Slot $w={28}><FillIcon /></Slot>
                <Slot $w={4}><Caret /></Slot>
                <Slot $w={36}><ColorA /></Slot>
                <Slot $w={4}><Caret /></Slot>
              </Row>
            </Stack>
          </GroupBody>
          <GroupFoot><FootText>Font</FootText><Launcher /></GroupFoot>
        </Group>

        <Group $w={262}>
          <GroupBody>
            <Stack $left={6} $right={5}>
              <Row>
                <Slot $w={22}><Lines rows={[[0, 14], [2, 10], [0, 0]]} top={1} /></Slot>
                <Slot $w={22}><Lines rows={[[0, 0], [2, 10], [0, 14], [2, 10]]} top={1} /></Slot>
                <ActiveSlot $w={23}><Lines rows={[[0, 0], [0, 0], [0, 14], [2, 10], [0, 14]]} top={1} /></ActiveSlot>
                <Slot $w={4} />
                <Slot $w={24}><Orient /></Slot>
                <Slot $w={10}><Caret /></Slot>
              </Row>
              <Row>
                <Slot $w={22}><Lines rows={[[0, 14], [0, 9], [0, 14], [0, 9]]} top={1} /></Slot>
                <Slot $w={22}><Lines rows={[[0, 14], [2, 10], [0, 14], [2, 10]]} top={1} /></Slot>
                <Slot $w={23}><Lines rows={[[0, 14], [5, 9], [0, 14], [5, 9]]} top={1} /></Slot>
                <Slot $w={4}><Sep /></Slot>
                <Slot $w={26}><Indent /></Slot>
                <Slot $w={20}><Indent flip /></Slot>
              </Row>
            </Stack>
            <VRule />
            <Stack>
              <Row><EndSlot $w={24}><WrapIcon /></EndSlot><ToolText>Wrap Text</ToolText></Row>
              <Row><EndSlot $w={24}><MergeIcon /></EndSlot><ToolText>Merge &amp; Center</ToolText><Slot $w={24}><Caret /></Slot></Row>
            </Stack>
          </GroupBody>
          <GroupFoot><FootText>Alignment</FootText><Launcher /></GroupFoot>
        </Group>

        <Group $w={146}>
          <GroupBody>
            <Stack $left={7}>
              <Row><Select $w={130}>General<Caret /></Select></Row>
              <Row>
                <Slot $w={20}><SansGlyph $s={15}>$</SansGlyph></Slot>
                <Slot $w={14}><Caret /></Slot>
                <Slot $w={26}><SansGlyph $s={15}>%</SansGlyph></Slot>
                <Slot $w={20}><CommaIcon /></Slot>
                <Slot $w={8}><Sep /></Slot>
                <Slot $w={20}><DecIcon inc /></Slot>
                <Slot $w={24}><DecIcon /></Slot>
              </Row>
            </Stack>
          </GroupBody>
          <GroupFoot><FootText>Number</FootText><Launcher /></GroupFoot>
        </Group>

        <Group $w={182}>
          <GroupBody>
            <BigButton $w={82}><BigIcon><CondIcon /></BigIcon><BigLine>Conditional</BigLine><BigLine>Formatting <Caret /></BigLine></BigButton>
            <BigButton $w={44}><BigIcon><TableIcon /></BigIcon><BigLine>Format as</BigLine><BigLine>Table <Caret /></BigLine></BigButton>
            <BigButton $w={52}><BigIcon><StyleIcon /></BigIcon><BigLine>Cell</BigLine><BigLine>Styles <Caret /></BigLine></BigButton>
          </GroupBody>
          <GroupFoot><FootText>Styles</FootText></GroupFoot>
        </Group>

        <Group $w={88}>
          <GroupBody>
            <ToolCol>
              <ToolRow><EndSlot $w={28}><InsertIcon /></EndSlot><ToolText>Insert</ToolText><Slot $w={18}><Caret /></Slot></ToolRow>
              <ToolRow><EndSlot $w={28}><DeleteIcon /></EndSlot><ToolText>Delete</ToolText><Slot $w={20}><Caret /></Slot></ToolRow>
              <ToolRow><EndSlot $w={28}><FormatIcon /></EndSlot><ToolText>Format</ToolText><Slot $w={8}><Caret /></Slot></ToolRow>
            </ToolCol>
          </GroupBody>
          <GroupFoot><FootText>Cells</FootText></GroupFoot>
        </Group>

        <Group $w={135}>
          <GroupBody>
            <ToolCol>
              <ToolRow><Slot $w={34}><Sigma /></Slot><Slot $w={0}><Caret /></Slot><Slot $w={5} /></ToolRow>
              <ToolRow><Slot $w={34}><FillDown /></Slot><Slot $w={0}><Caret /></Slot><Slot $w={5} /></ToolRow>
              <ToolRow><Slot $w={34}><Eraser /></Slot><Slot $w={0}><Caret /></Slot><Slot $w={5} /></ToolRow>
            </ToolCol>
            <BigButton $w={46}><BigIcon><SortIcon /></BigIcon><BigLine>Sort &amp;</BigLine><BigLine>Filter <Caret /></BigLine></BigButton>
            <BigButton $w={40}><BigIcon><FindIcon /></BigIcon><BigLine>Find &amp;</BigLine><BigLine>Select <Caret /></BigLine></BigButton>
          </GroupBody>
          <GroupFoot><FootText>Editing</FootText></GroupFoot>
        </Group>

        <Group $w={93}>
          <GroupBody>
            <BigButton $w={52}><BigIcon><PdfIcon /></BigIcon><BigLine>Create</BigLine><BigLine>PDF</BigLine></BigButton>
            <BigButton $w={24}><BigIcon><SignIcon /></BigIcon><BigLine>Sign</BigLine></BigButton>
          </GroupBody>
          <GroupFoot><FootText>WPS PDF</FootText></GroupFoot>
        </Group>
        <Collapse><ChevronUp /></Collapse>
      </Ribbon>

      <FormulaBar>
        <NameBox>L3<Tri d="d" c="#777" /></NameBox>
        <Dots><i /><i /><i /></Dots>
        <FxGroup>
          <svg width="11" height="11" viewBox="0 0 11 11" fill="none" stroke="#c4c4c4" strokeWidth="1.300"><path d="M1 1l9 9M10 1l-9 9" /></svg>
          <svg width="13" height="11" viewBox="0 0 13 11" fill="none" stroke="#c4c4c4" strokeWidth="1.500"><path d="M1 6l3.500 4L12 1" /></svg>
          <FxMark>fx</FxMark>
        </FxGroup>
        <FormulaInput />
        <FormulaCollapse><ChevronUp /></FormulaCollapse>
      </FormulaBar>

      <SheetArea>
        <Grid>
          <Corner $col />
          {COLS.map((c) => <HeadCell key={c} $col $on={c === "L"} $bb={c === "L" ? "2px solid #2c8a57" : undefined}>{c}</HeadCell>)}
          {rowNums.map((r) => (
            <React.Fragment key={r}>
              <HeadCell $on={r === 3} $rb={r === 3 ? "2px solid #2c8a57" : r <= 13 ? THICK : undefined} $bb="1px solid #d2d2d2">{r}</HeadCell>
              {COLS.map((c) => cellFor(c, r))}
            </React.Fragment>
          ))}
        </Grid>
        <VScroll>
          <ScrollBtn><Tri d="u" /></ScrollBtn>
          <VThumb />
          <VFill />
          <ScrollBtn><Tri d="d" /></ScrollBtn>
        </VScroll>
      </SheetArea>

      <TabStrip>
        <Slot $w={26}><Tri d="l" c="#bdbdbd" /></Slot>
        <Slot $w={26}><Tri d="r" c="#bdbdbd" /></Slot>
        <SheetTab>Sheet1</SheetTab>
        <Slot $w={78}><PlusCircle>+</PlusCircle></Slot>
        <HScroll>
          <VDots><i /><i /><i /></VDots>
          <ScrollBtn $w={13}><Tri d="l" /></ScrollBtn>
          <HTrack />
          <HThumb />
          <ScrollBtn $w={14}><Tri d="r" /></ScrollBtn>
        </HScroll>
      </TabStrip>

      <StatusBar>
        Ready
        <StatusGap />
        <ViewBtn $w={37} $on><ViewGrid /></ViewBtn>
        <ViewBtn $w={38}><ViewPage /></ViewBtn>
        <ViewBtn $w={36}><ViewBreak /></ViewBtn>
        <Slot $w={19}>−</Slot>
        <Zoomer><ZoomThumb /></Zoomer>
        <Slot $w={18}>+</Slot>
        <Pct>93%</Pct>
        <Slot $w={7} />
      </StatusBar>

      <Taskbar>
        <Weather><WeatherIcon><Umbrella /><Badge>3</Badge></WeatherIcon></Weather>
        <Slot $w={40}><WinLogo /></Slot>
        <TaskSearch><TaskGlass />Search<Scene /></TaskSearch>
        <TaskApp><TaskView /></TaskApp>
        <TaskApp><Camera /></TaskApp>
        <TaskApp $dot><Folder /></TaskApp>
        <TaskApp><Copilot /></TaskApp>
        <TaskApp><Edge /></TaskApp>
        <TaskApp><Photo /></TaskApp>
        <TaskApp><Store /></TaskApp>
        <TaskApp><Globe /></TaskApp>
        <TaskApp $dot><ChromeWrap><Chrome /><HBadge>H</HBadge></ChromeWrap></TaskApp>
        <TaskApp $dot $active><ExcelIcon /></TaskApp>
        <TaskApp $dot><Recorder /></TaskApp>
        <TraySpacer />
        <Slot $w={28}><TrayUp /></Slot>
        <Slot $w={32}><GDrive /></Slot>
        <Slot $w={30}><Cloud /></Slot>
        <EngLabel $w={42}>ENG</EngLabel>
        <Slot $w={26}><Wifi /></Slot>
        <Slot $w={16}><Speaker /></Slot>
        <Slot $w={34}><Battery /></Slot>
        <Clock><span>1:52 PM</span><span>3/8/2026</span></Clock>
      </Taskbar>
    </Window>
  );
}
